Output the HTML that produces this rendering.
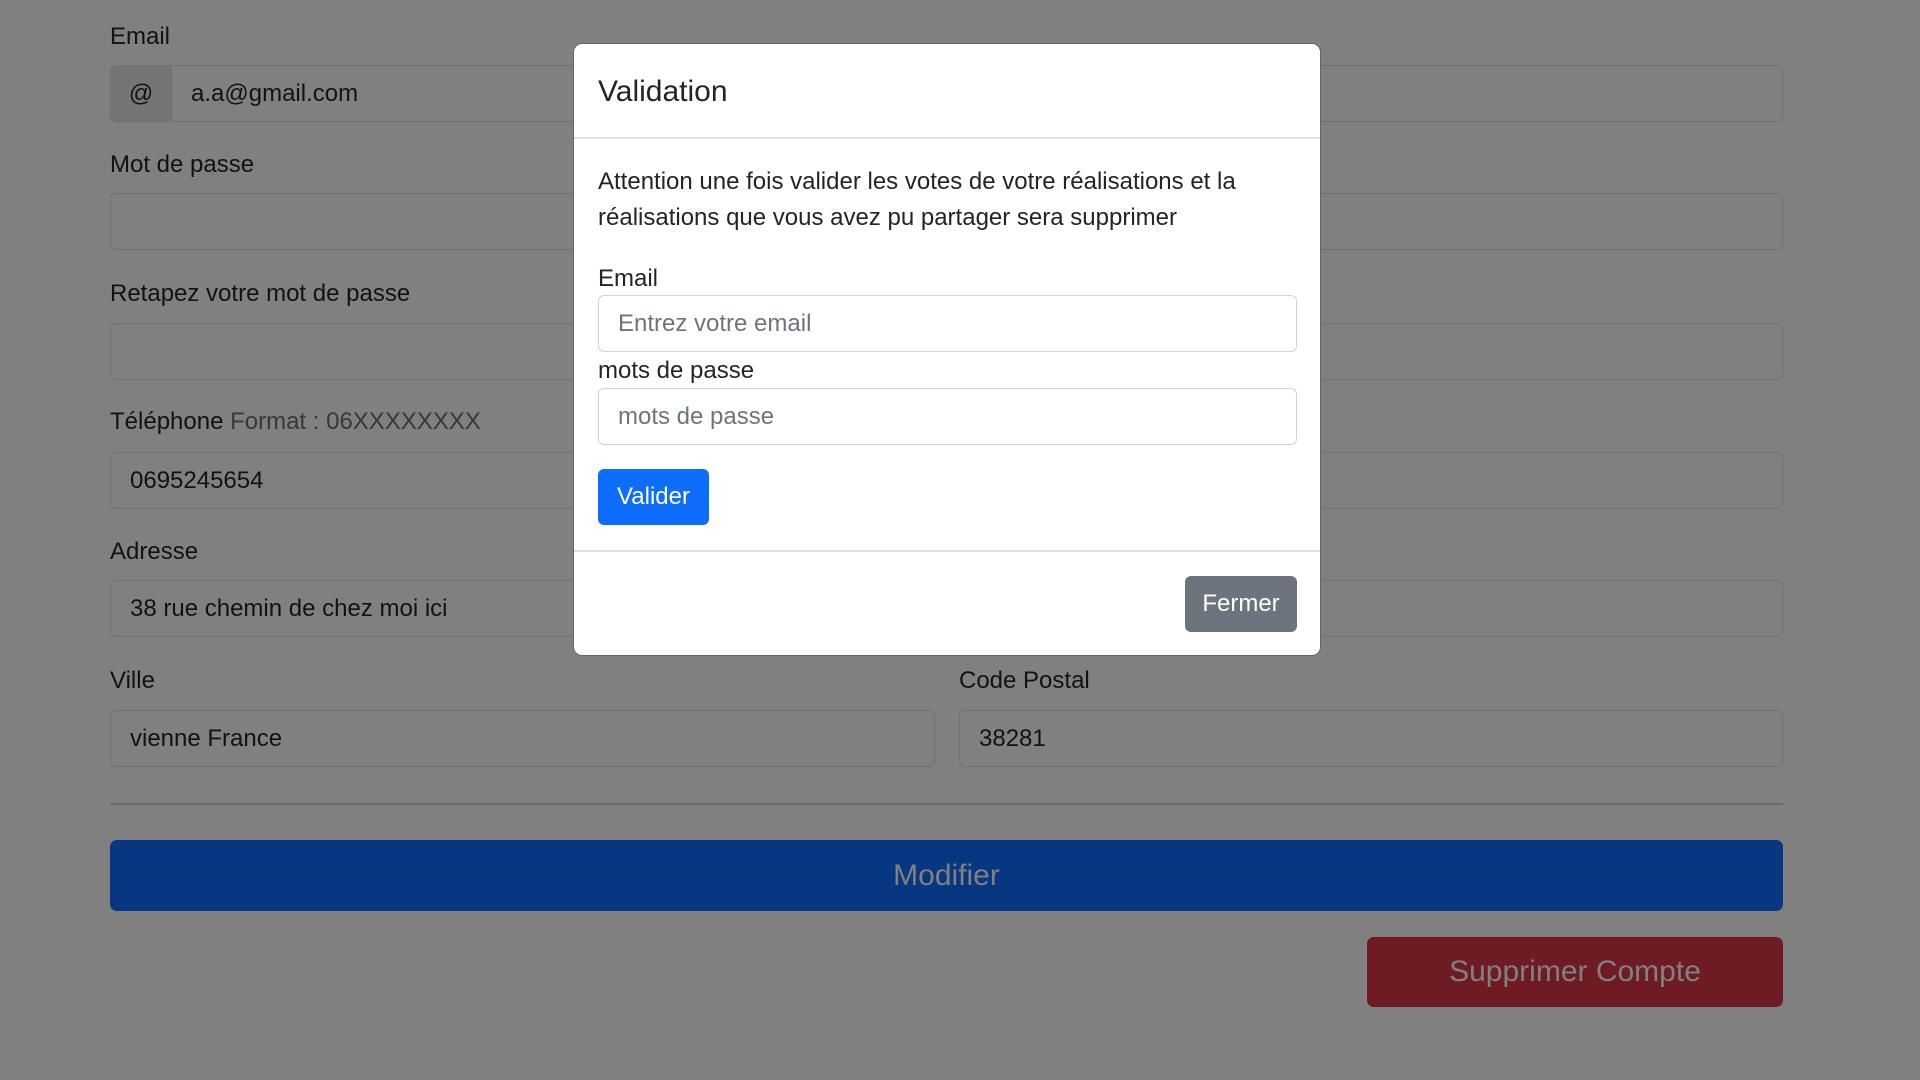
<!DOCTYPE html>
<html><head><meta charset="utf-8"><style>
*{box-sizing:border-box;margin:0;padding:0}
body{width:1920px;height:1080px;background:#808080;font-family:"Liberation Sans",sans-serif;font-size:24px;color:#111214;position:relative;overflow:hidden}
.a{position:absolute}
.lbl{position:absolute;left:110px;line-height:30px}
.inp{position:absolute;border:1.5px solid #6f7275;border-radius:6px;background:#808080;padding-left:19px;display:flex;align-items:center;height:57px}
.modal{position:absolute;left:573px;top:43px;width:748px;height:613px;background:#fff;border-radius:9px;border:1px solid #666;color:#212529}
.m-inp{position:absolute;left:24px;width:699px;height:57px;border:1.5px solid #ced4da;border-radius:6px;display:flex;align-items:center;padding-left:19px;color:#6c757d}
</style></head><body>
<div class="lbl" style="top:22px">Email</div>
<div class="inp" style="left:110px;top:65px;width:1673px;padding-left:0">
<div style="width:61px;height:100%;background:#747577;border-right:1.5px solid #6f7275;border-radius:6px 0 0 6px;display:flex;align-items:center;justify-content:center">@</div>
<div style="padding-left:19px">a.a@gmail.com</div></div>
<div class="lbl" style="top:150px">Mot de passe</div>
<div class="inp" style="left:110px;top:193px;width:1673px"></div>
<div class="lbl" style="top:279px">Retapez votre mot de passe</div>
<div class="inp" style="left:110px;top:323px;width:1673px"></div>
<div class="lbl" style="top:407px">Téléphone <span style="color:#36393c">Format : 06XXXXXXXX</span></div>
<div class="inp" style="left:110px;top:452px;width:1673px">0695245654</div>
<div class="lbl" style="top:537px">Adresse</div>
<div class="inp" style="left:110px;top:580px;width:1673px">38 rue chemin de chez moi ici</div>
<div class="lbl" style="top:666px">Ville</div>
<div class="inp" style="left:110px;top:710px;width:825px">vienne France</div>
<div class="lbl" style="top:666px;left:959px">Code Postal</div>
<div class="inp" style="left:959px;top:710px;width:824px">38281</div>
<div class="a" style="left:110px;top:803px;width:1673px;height:2px;background:#6c6c6c"></div>
<div class="a" style="left:110px;top:840px;width:1673px;height:71px;background:#063780;border-radius:7px;color:#808080;font-size:30px;display:flex;align-items:center;justify-content:center">Modifier</div>
<div class="a" style="left:1367px;top:937px;width:416px;height:70px;background:#6e1b23;border-radius:7px;color:#808080;font-size:30px;display:flex;align-items:center;justify-content:center">Supprimer Compte</div>

<div class="modal">
<div class="a" style="left:24px;top:30px;font-size:30px;line-height:36px;font-weight:500">Validation</div>
<div class="a" style="left:0;top:93px;width:100%;height:1.5px;background:#dee2e6"></div>
<div class="a" style="left:24px;top:120px;width:700px;line-height:36px">Attention une fois valider les votes de votre réalisations et la réalisations que vous avez pu partager sera supprimer</div>
<div class="a" style="left:24px;top:220px;line-height:30px">Email</div>
<div class="m-inp" style="top:251px">Entrez votre email</div>
<div class="a" style="left:24px;top:312px;line-height:30px">mots de passe</div>
<div class="m-inp" style="top:344px">mots de passe</div>
<div class="a" style="left:24px;top:425px;width:111px;height:56px;background:#0d6efd;border-radius:6px;color:#fff;display:flex;align-items:center;justify-content:center">Valider</div>
<div class="a" style="left:0;top:506px;width:100%;height:1.5px;background:#dee2e6"></div>
<div class="a" style="left:611px;top:532px;width:112px;height:56px;background:#6c757d;border-radius:6px;color:#fff;display:flex;align-items:center;justify-content:center">Fermer</div>
</div>
</body></html>
